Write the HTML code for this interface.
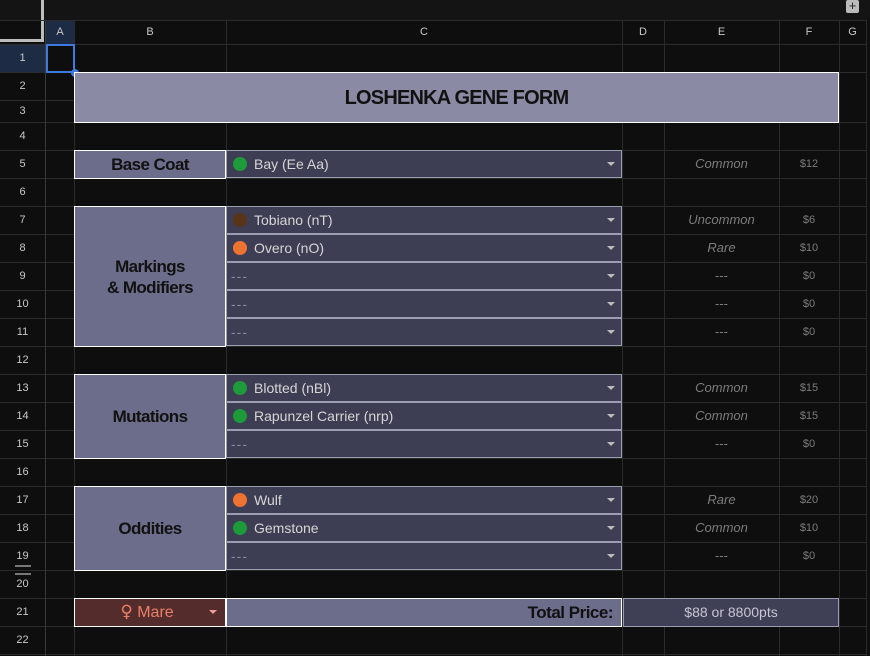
<!DOCTYPE html>
<html><head><meta charset="utf-8"><style>
*{margin:0;padding:0;box-sizing:border-box}
body{width:870px;height:656px;background:#0e0e0f;position:relative;overflow:hidden;font-family:"Liberation Sans",sans-serif}
.a{position:absolute}
.h{position:absolute;height:1px;background:#2b2b2b;left:0;width:866px}
.v{position:absolute;width:1px;background:#2b2b2b;top:20px;height:636px}
.rn{position:absolute;left:0;width:45px;text-align:center;font-size:11px;color:#c8c8c8}
.cn{position:absolute;top:20px;height:24px;line-height:24px;text-align:center;font-size:11px;color:#c8c8c8}
.lab{position:absolute;left:74px;width:152px;background:#6b6d8a;border:1px solid #fff;display:flex;align-items:center;justify-content:center;text-align:center;font-weight:bold;font-size:17px;color:#111;line-height:21px;letter-spacing:-0.6px}
.dd{position:absolute;left:226px;width:396px;height:28px;background:#3d3d53;border:1px solid #9c9cb4;font-size:14px;color:#d6d6d6;line-height:26px;padding-left:27px}
.dd.e{padding-left:4px;color:#8a8a9a;letter-spacing:1px}
.dd:after{content:"";position:absolute;right:6px;top:11px;border-left:4px solid transparent;border-right:4px solid transparent;border-top:4px solid #bbb}
.dot{position:absolute;left:6px;top:6px;width:14px;height:14px;border-radius:50%}
.g{background:#1d9a3a}.o{background:#f07232}.b{background:#5a3418}
.r{position:absolute;left:664px;width:115px;text-align:center;font-style:italic;font-size:13px;color:#7c7c7c;line-height:28px}
.p{position:absolute;left:779px;width:60px;text-align:center;font-size:11px;color:#7c7c7c;line-height:28px}
</style></head><body>
<div class="a" style="left:0;top:0;width:870px;height:20px;background:#141414"></div>
<div class="a" style="left:0;top:0;width:44px;height:42px;border-right:3px solid #bdbdbd;border-bottom:3px solid #bdbdbd"></div>
<div class="a" style="left:846px;top:0;width:13px;height:13px;background:#bbb;border-radius:2px;color:#222;font-size:13px;line-height:12px;text-align:center">+</div>
<div class="a" style="left:0;top:44px;width:45px;height:28px;background:#1e2b44"></div>
<div class="a" style="left:46px;top:20px;width:28px;height:24px;background:#1e2b44"></div>
<div class="h" style="top:20px"></div><div class="h" style="top:44px"></div><div class="h" style="top:72px"></div><div class="h" style="top:100px;width:74px"></div><div class="h" style="top:122px"></div><div class="h" style="top:150px"></div><div class="h" style="top:178px"></div><div class="h" style="top:206px"></div><div class="h" style="top:234px"></div><div class="h" style="top:262px"></div><div class="h" style="top:290px"></div><div class="h" style="top:318px"></div><div class="h" style="top:346px"></div><div class="h" style="top:374px"></div><div class="h" style="top:402px"></div><div class="h" style="top:430px"></div><div class="h" style="top:458px"></div><div class="h" style="top:486px"></div><div class="h" style="top:514px"></div><div class="h" style="top:542px"></div><div class="h" style="top:570px"></div><div class="h" style="top:598px"></div><div class="h" style="top:626px"></div><div class="h" style="top:654px"></div>
<div class="v" style="left:45px;background:#3a3a3a"></div><div class="v" style="left:74px"></div><div class="v" style="left:226px"></div><div class="v" style="left:622px"></div><div class="v" style="left:664px"></div><div class="v" style="left:779px"></div><div class="v" style="left:839px"></div><div class="v" style="left:866px"></div>
<div class="cn" style="left:46px;width:28px">A</div><div class="cn" style="left:74px;width:152px">B</div><div class="cn" style="left:226px;width:396px">C</div><div class="cn" style="left:622px;width:42px">D</div><div class="cn" style="left:664px;width:115px">E</div><div class="cn" style="left:779px;width:60px">F</div><div class="cn" style="left:839px;width:27px">G</div>
<div class="rn" style="top:44px;line-height:28px">1</div><div class="rn" style="top:72px;line-height:28px">2</div><div class="rn" style="top:100px;line-height:22px">3</div>
<div class="rn" style="top:122px;line-height:28px">4</div><div class="rn" style="top:150px;line-height:28px">5</div><div class="rn" style="top:178px;line-height:28px">6</div><div class="rn" style="top:206px;line-height:28px">7</div><div class="rn" style="top:234px;line-height:28px">8</div><div class="rn" style="top:262px;line-height:28px">9</div><div class="rn" style="top:290px;line-height:28px">10</div><div class="rn" style="top:318px;line-height:28px">11</div><div class="rn" style="top:346px;line-height:28px">12</div><div class="rn" style="top:374px;line-height:28px">13</div><div class="rn" style="top:402px;line-height:28px">14</div><div class="rn" style="top:430px;line-height:28px">15</div><div class="rn" style="top:458px;line-height:28px">16</div><div class="rn" style="top:486px;line-height:28px">17</div><div class="rn" style="top:514px;line-height:28px">18</div><div class="rn" style="top:542px;line-height:28px">19</div><div class="rn" style="top:570px;line-height:28px">20</div><div class="rn" style="top:598px;line-height:28px">21</div><div class="rn" style="top:626px;line-height:28px">22</div>
<div class="a" style="left:15px;top:565px;width:16px;height:2px;background:#777"></div><div class="a" style="left:15px;top:573px;width:16px;height:2px;background:#777"></div>
<div class="a" style="left:46px;top:44px;width:29px;height:29px;border:2px solid #3d7ae0"></div>
<div class="a" style="left:71px;top:69px;width:8px;height:8px;border-radius:50%;background:#3d7ae0"></div>
<div class="a" style="left:74px;top:72px;width:765px;height:51px;background:#8a8aa4;border:1px solid #fff;text-align:center;line-height:51px;font-weight:bold;font-size:20px;color:#111;letter-spacing:-0.8px">LOSHENKA GENE FORM</div>
<div class="lab" style="top:150px;height:29px">Base Coat</div>
<div class="lab" style="top:206px;height:141px">Markings<br>&amp; Modifiers</div>
<div class="lab" style="top:374px;height:85px">Mutations</div>
<div class="lab" style="top:486px;height:85px">Oddities</div>
<div class="dd" style="top:150px"><span class="dot g"></span>Bay (Ee Aa)</div>
<div class="dd" style="top:206px"><span class="dot b"></span>Tobiano (nT)</div>
<div class="dd" style="top:234px"><span class="dot o"></span>Overo (nO)</div>
<div class="dd e" style="top:262px">---</div><div class="dd e" style="top:290px">---</div><div class="dd e" style="top:318px">---</div>
<div class="dd" style="top:374px"><span class="dot g"></span>Blotted (nBl)</div>
<div class="dd" style="top:402px"><span class="dot g"></span>Rapunzel Carrier (nrp)</div>
<div class="dd e" style="top:430px">---</div>
<div class="dd" style="top:486px"><span class="dot o"></span>Wulf</div>
<div class="dd" style="top:514px"><span class="dot g"></span>Gemstone</div>
<div class="dd e" style="top:542px">---</div>
<div class="r" style="top:150px">Common</div><div class="p" style="top:150px">$12</div>
<div class="r" style="top:206px">Uncommon</div><div class="p" style="top:206px">$6</div>
<div class="r" style="top:234px">Rare</div><div class="p" style="top:234px">$10</div>
<div class="r" style="top:262px;font-style:normal">---</div><div class="p" style="top:262px">$0</div>
<div class="r" style="top:290px;font-style:normal">---</div><div class="p" style="top:290px">$0</div>
<div class="r" style="top:318px;font-style:normal">---</div><div class="p" style="top:318px">$0</div>
<div class="r" style="top:374px">Common</div><div class="p" style="top:374px">$15</div>
<div class="r" style="top:402px">Common</div><div class="p" style="top:402px">$15</div>
<div class="r" style="top:430px;font-style:normal">---</div><div class="p" style="top:430px">$0</div>
<div class="r" style="top:486px">Rare</div><div class="p" style="top:486px">$20</div>
<div class="r" style="top:514px">Common</div><div class="p" style="top:514px">$10</div>
<div class="r" style="top:542px;font-style:normal">---</div><div class="p" style="top:542px">$0</div>
<div class="a" style="left:74px;top:598px;width:152px;height:29px;background:#552c2c;border:1px solid #fff;color:#e8806a;font-size:16px;line-height:27px;text-align:center;padding-right:6px"><span style="font-family:'DejaVu Sans',sans-serif;font-size:17px">♀</span> Mare</div>
<div class="a" style="left:209px;top:610px;border-left:4px solid transparent;border-right:4px solid transparent;border-top:4px solid #f09a9a"></div>
<div class="a" style="left:226px;top:598px;width:396px;height:29px;background:#6b6d8a;border:1px solid #fff;text-align:right;padding-right:8px;font-weight:bold;font-size:17px;line-height:27px;color:#111;letter-spacing:-0.5px">Total Price:</div>
<div class="a" style="left:623px;top:598px;width:216px;height:29px;background:#3f3f55;border:1px solid #9c9cb4;text-align:center;font-size:14px;line-height:27px;color:#c6c6d4">$88 or 8800pts</div>
</body></html>
